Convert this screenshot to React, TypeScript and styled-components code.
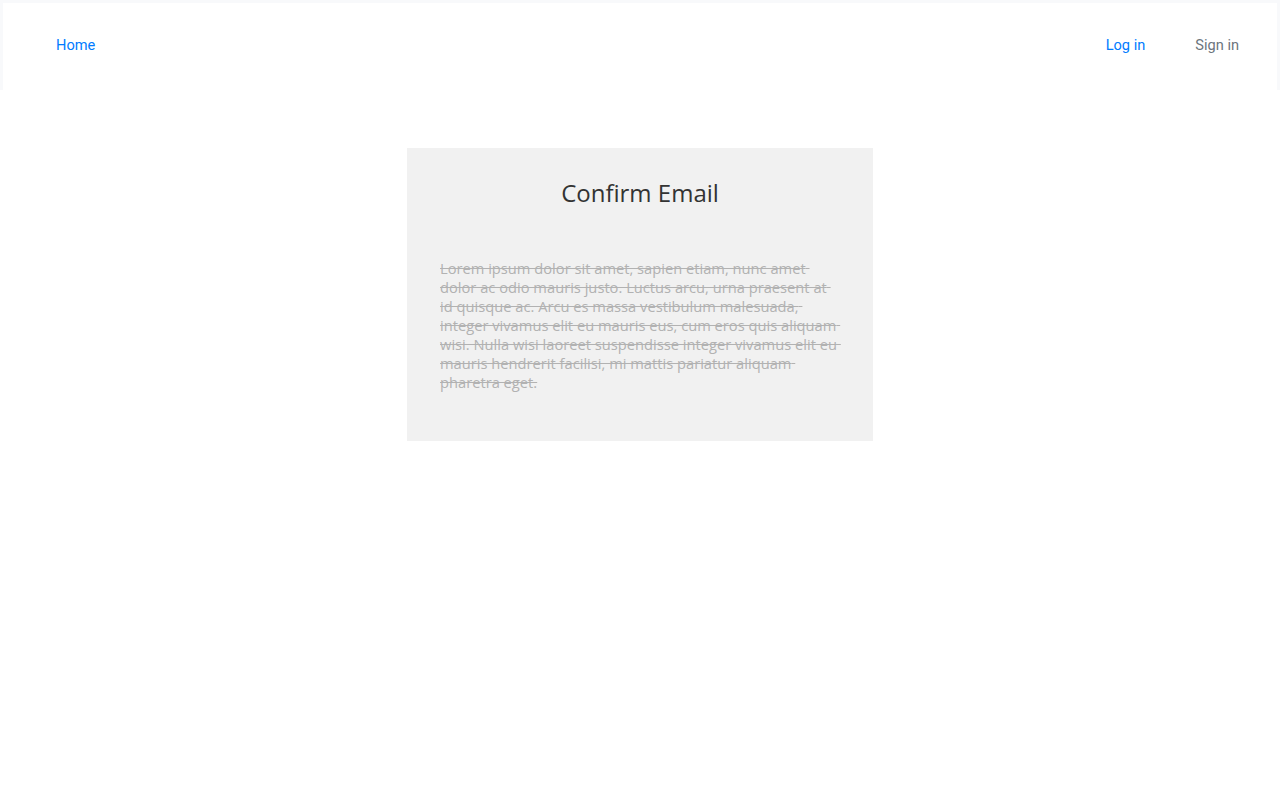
import React from "react";
import styled, { createGlobalStyle } from "styled-components";

const Global = createGlobalStyle`
  html, body { margin: 0; padding: 0; background: #ffffff; }
  body { font-family: Roboto, "Liberation Sans", sans-serif; }
  * { box-sizing: border-box; }
`;

const HeaderFrame = styled.div`
  padding: 3px 3px 0 3px;
  background: #f8f9fb;
`;

const Header = styled.header`
  height: 87px;
  background: #ffffff;
  display: flex;
  align-items: center;
  justify-content: space-between;
  padding: 0 38px 3px 53px;
`;

const NavGroup = styled.nav`
  display: flex;
  align-items: center;
  gap: 50px;
`;

const NavLink = styled.a<{ $muted?: boolean }>`
  font-family: Roboto, "Liberation Sans", sans-serif;
  font-size: 14.6px;
  line-height: 20px;
  color: ${(p) => (p.$muted ? "#6c757d" : "#007bff")};
  text-decoration: none;
  cursor: pointer;
`;

const Main = styled.main`
  display: flex;
  justify-content: center;
  padding-top: 58px;
`;

const Card = styled.section`
  width: 466px;
  height: 293px;
  background: #f1f1f1;
  padding: 30px 33px 0 33px;
  display: flex;
  flex-direction: column;
`;

const Title = styled.h1`
  margin: 0;
  font-family: "Open Sans", "Liberation Sans", sans-serif;
  font-weight: 400;
  font-size: 24px;
  line-height: 30px;
  color: #333333;
  text-align: center;
`;

const Body = styled.p`
  margin: 51px 0 0 0;
  font-family: "Open Sans", "Liberation Sans", sans-serif;
  font-size: 14.7px;
  line-height: 19px;
  color: #b2b2b2;
  text-decoration: line-through;
  white-space: pre-wrap;
`;

export default function App() {
  return (
    <>
      <Global />
      <HeaderFrame>
        <Header>
          <NavGroup>
            <NavLink>Home</NavLink>
          </NavGroup>
          <NavGroup>
            <NavLink>Log in</NavLink>
            <NavLink $muted>Sign in</NavLink>
          </NavGroup>
        </Header>
      </HeaderFrame>
      <Main>
        <Card>
          <Title>Confirm Email</Title>
          <Body>
            {"Lorem ipsum dolor sit amet, sapien etiam, nunc amet dolor ac odio mauris justo. Luctus arcu, urna praesent at id quisque ac. Arcu es massa vestibulum malesuada, integer vivamus elit eu mauris eus, cum eros quis aliquam wisi. Nulla wisi laoreet suspendisse integer vivamus elit eu mauris hendrerit facilisi, mi mattis pariatur aliquam pharetra eget."}
          </Body>
        </Card>
      </Main>
    </>
  );
}
